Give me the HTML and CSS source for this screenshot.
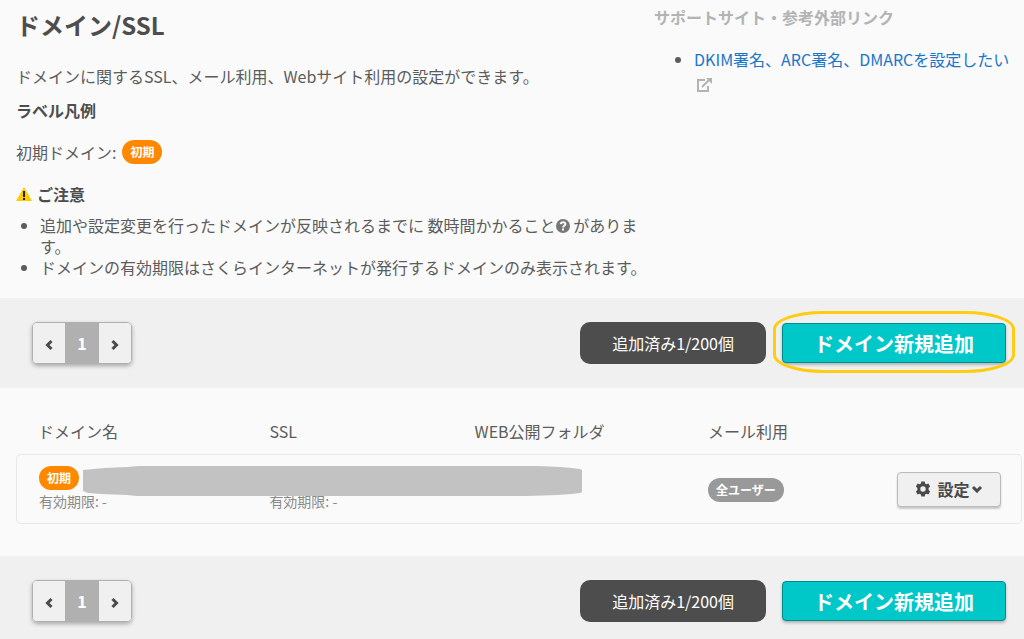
FILE: index.html
```html
<!DOCTYPE html>
<html lang="ja">
<head>
    <meta charset="UTF-8">
    <meta name="viewport" content="width=device-width, initial-scale=1.0">
    <title>ドメイン/SSL</title>
    <link rel="stylesheet" href="styles.css">
</head>
<body>
    <header class="intro">
        <div class="intro-main">
            <h1>ドメイン/SSL</h1>
            <p class="lead">ドメインに関するSSL、メール利用、Webサイト利用の設定ができます。</p>
            <h2>ラベル凡例</h2>
            <p class="legend">初期ドメイン: <span class="badge">初期</span></p>
            <h2 class="caution">
                <svg width="16" height="14" viewBox="0 0 16 14" aria-hidden="true"><path fill="#fc0" d="M8 0l8 14H0z"/><path fill="#222" d="M7 4h2v6H7zM7 11h2v2H7z"/></svg>
                ご注意
            </h2>
            <ul class="notes">
                <li>追加や設定変更を行ったドメインが反映されるまでに 数時間かかること<svg class="help" width="14" height="14" viewBox="0 0 14 14" aria-hidden="true"><circle cx="7" cy="7" r="7" fill="#777"/><path d="M4.700 5.200C4.900 3.700 6 3.200 7.100 3.200c1.300 0 2.300.7 2.300 1.900 0 1.600-2.300 1.600-2.300 3.300" fill="none" stroke="#fafafa" stroke-width="2"/><path fill="#fafafa" d="M6 9.400h2v2H6z"/></svg> があります。</li>
                <li>ドメインの有効期限はさくらインターネットが発行するドメインのみ表示されます。</li>
            </ul>
        </div>
        <aside class="support">
            <h2>サポートサイト・参考外部リンク</h2>
            <ul>
                <li><a href="#">DKIM署名、ARC署名、DMARCを設定したい <svg class="external" width="16" height="14" viewBox="0 0 16 14" aria-hidden="true"><path d="M9 2H2v11h10V8" fill="none" stroke="#b3b3b3" stroke-width="2"/><path d="M6 9l7-7" stroke="#b3b3b3" stroke-width="2"/><path fill="#b3b3b3" d="M10 0h6v6z"/></svg></a></li>
            </ul>
        </aside>
    </header>

    <div class="toolbar">
        <nav class="pager" aria-label="ページ">
            <button type="button" aria-label="前へ"><svg width="8" height="12" viewBox="0 0 8 12"><path d="M6.500 2L2.500 6l4 4"/></svg></button>
            <button type="button" class="current">1</button>
            <button type="button" aria-label="次へ"><svg width="8" height="12" viewBox="0 0 8 12"><path d="M1.500 2l4 4-4 4"/></svg></button>
        </nav>
        <span class="count">追加済み1/200個</span>
        <div class="add highlight">
            <button type="button" class="add-button">ドメイン新規追加</button>
        </div>
    </div>

    <main class="domains">
        <table>
            <thead>
                <tr>
                    <th class="col-domain">ドメイン名</th>
                    <th class="col-ssl">SSL</th>
                    <th class="col-folder">WEB公開フォルダ</th>
                    <th class="col-mail">メール利用</th>
                    <th></th>
                </tr>
            </thead>
            <tbody>
                <tr>
                    <td class="domain">
                        <div class="name"><span class="badge">初期</span></div>
                        <div class="expiry">有効期限: -</div>
                        <svg class="mask" width="499" height="30" viewBox="0 0 499 30" aria-hidden="true"><path fill="#c2c2c2" d="M0 4l10-1 12-1 22-1 12-1h399l22 1 12 1 8 1q3 1 3 4v17q0 2-3 3l-8 1-15 1-30 1H54l-10-1-26-1-13-1-5-2z"/></svg>
                    </td>
                    <td>
                        <div class="name"></div>
                        <div class="expiry">有効期限: -</div>
                    </td>
                    <td></td>
                    <td class="middle"><span class="badge badge-user">全ユーザー</span></td>
                    <td class="middle actions">
                        <button type="button" class="settings">
                            <svg width="16" height="16" viewBox="0 0 16 16" aria-hidden="true"><path fill="#4a4a4a" fill-rule="evenodd" d="M6.300.5h3.400l.4 2 1.300.8 2-.7 1.700 2.900-1.500 1.400v2.200l1.500 1.400-1.700 2.900-2-.7-1.300.8-.4 2H6.300l-.4-2-1.300-.8-2 .7-1.700-2.900 1.500-1.400V6.900L.9 5.500l1.700-2.900 2 .7 1.300-.8zM8 5.300a2.700 2.700 0 1 0 0 5.400 2.700 2.700 0 0 0 0-5.400z"/></svg>
                            <span>設定</span><svg width="12" height="8" viewBox="0 0 12 8" aria-hidden="true"><path d="M2 2l4 4 4-4" fill="none" stroke="#4a4a4a" stroke-width="3"/></svg>
                        </button>
                    </td>
                </tr>
            </tbody>
        </table>
    </main>

    <div class="toolbar">
        <nav class="pager" aria-label="ページ">
            <button type="button" aria-label="前へ"><svg width="8" height="12" viewBox="0 0 8 12"><path d="M6.500 2L2.500 6l4 4"/></svg></button>
            <button type="button" class="current">1</button>
            <button type="button" aria-label="次へ"><svg width="8" height="12" viewBox="0 0 8 12"><path d="M1.500 2l4 4-4 4"/></svg></button>
        </nav>
        <span class="count">追加済み1/200個</span>
        <div class="add">
            <button type="button" class="add-button">ドメイン新規追加</button>
        </div>
    </div>
</body>
</html>
```
FILE: styles.css
```css
* {
    box-sizing: border-box;
}
body {
    margin: 0;
    background: #fafafa;
    color: #5c5c5c;
    font-family: "Noto Sans CJK JP", sans-serif;
    font-size: 16px;
    line-height: 24px;
}
h1, h2, p, ul {
    margin: 0;
}
h1, h2 {
    color: #4d4d4d;
}
h1 {
    font-size: 24px;
    line-height: 34px;
}
h2 {
    font-size: 16px;
}
button {
    font-family: inherit;
    cursor: pointer;
}
.intro {
    display: grid;
    grid-template-columns: 12fr 7fr;
    column-gap: 4px;
    padding-left: 16px;
}
.intro-main {
    padding: 8px 0 20px;
}
.lead {
    margin: 22px 0 10px;
}
.legend {
    display: flex;
    align-items: center;
    gap: 6px;
    margin: 18px 0;
}
.badge {
    display: inline-block;
    padding: 0 8px;
    border-radius: 12px;
    background: #ff8800;
    color: #fff;
    font-size: 12px;
    font-weight: bold;
    line-height: 24px;
}
.badge-user {
    background: #999;
}
.caution {
    display: flex;
    align-items: center;
    gap: 5px;
}
.notes {
    margin-top: 9px;
    padding-left: 24px;
    line-height: 21px;
}
.help {
    vertical-align: -1px;
}
.support {
    padding-top: 5px;
}
.support h2 {
    color: #b3b3b3;
}
.support ul {
    margin-top: 18px;
    padding-left: 40px;
    line-height: 25px;
}
.support a {
    color: #1b75c9;
    text-decoration: none;
}
.external {
    margin-left: 2px;
    vertical-align: -1px;
}
.toolbar {
    display: flex;
    align-items: center;
    padding: 24px 18px 24px 32px;
    background: #f0f0f0;
}
.pager {
    display: flex;
    margin-right: auto;
    border: 1px solid #b0b0b0;
    border-radius: 5px;
    box-shadow: 0 2px 4px rgba(0, 0, 0, 0.3);
    overflow: hidden;
}
.pager button {
    width: 32px;
    height: 40px;
    padding: 0;
    border: none;
    background: #f0f0f0;
}
.pager svg {
    fill: none;
    stroke: #4a4a4a;
    stroke-width: 3;
    vertical-align: middle;
}
.pager .current {
    width: 34px;
    background: #b0b0b0;
    color: #fff;
    font-size: 16px;
    font-weight: bold;
}
.count {
    padding: 0 32px;
    border-radius: 10px;
    background: #4d4d4d;
    color: #fff;
    line-height: 42px;
}
.add {
    position: relative;
    margin-left: 16px;
}
.add-button {
    display: block;
    height: 40px;
    padding: 0 31px;
    border: 1px solid #008c8c;
    border-radius: 4px;
    background: #00c8c8;
    box-shadow: 0 2px 3px rgba(0, 0, 0, 0.25);
    color: #fff;
    font-size: 20px;
    font-weight: bold;
}
.highlight::after {
    content: "";
    position: absolute;
    inset: -12px -9px -10px;
    border: 3px solid #fc1;
    border-radius: 50px / 18px;
    pointer-events: none;
}
.domains {
    padding: 0 2px 32px 16px;
}
table {
    width: 100%;
    table-layout: fixed;
    border-collapse: separate;
    border-spacing: 0;
}
th {
    padding: 31px 0 11px 22px;
    font-weight: normal;
    text-align: left;
}
.col-domain {
    width: 23%;
}
.col-ssl {
    width: 20.4%;
}
.col-folder {
    width: 23.2%;
}
.col-mail {
    width: 16%;
}
td {
    height: 70px;
    padding: 11px 0 0 22px;
    border: solid #e8e8e8;
    border-width: 1px 0;
    vertical-align: top;
}
td:first-child {
    border-left-width: 1px;
    border-radius: 5px 0 0 5px;
}
td:last-child {
    border-right-width: 1px;
    border-radius: 0 5px 5px 0;
}
.domain {
    position: relative;
}
.name {
    display: flex;
    height: 24px;
}
.expiry {
    color: #8a8a8a;
    font-size: 14px;
    line-height: 22px;
}
.mask {
    position: absolute;
    top: 11px;
    left: 66px;
}
.middle {
    padding-top: 0;
    vertical-align: middle;
}
.actions {
    padding: 0 20px 0 0;
}
.settings {
    display: flex;
    align-items: center;
    justify-content: center;
    width: 104px;
    height: 35px;
    margin-left: auto;
    padding: 0;
    border: 1px solid #bbb;
    border-radius: 4px;
    background: #f0f0f0;
    box-shadow: 0 2px 2px rgba(0, 0, 0, 0.2);
    color: #4a4a4a;
    font-size: 16px;
    font-weight: bold;
}
.settings span {
    margin: 0 1px 0 6px;
}
```
